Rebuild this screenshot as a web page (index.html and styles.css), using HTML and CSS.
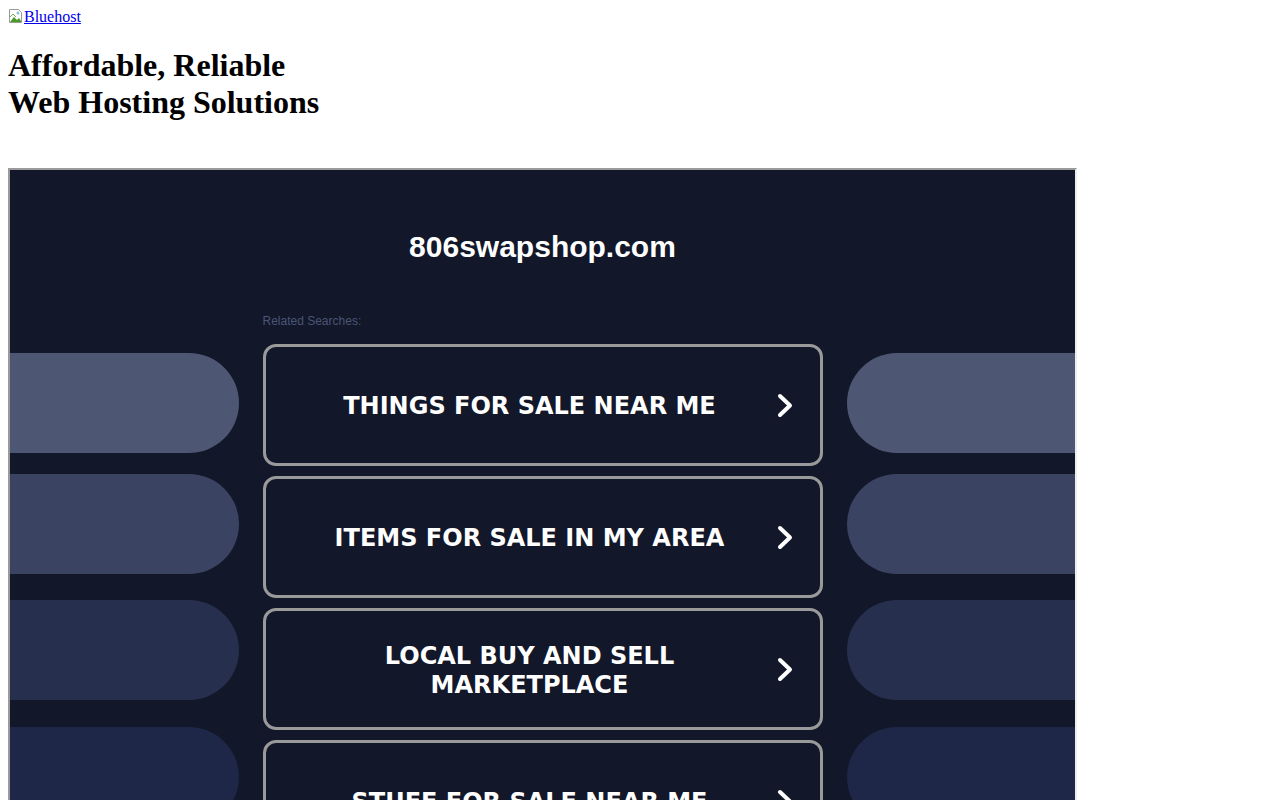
FILE: index.html
```html
<!DOCTYPE html>
<html>
<head>
<meta charset="utf-8">
<title>806swapshop.com</title>
<link rel="stylesheet" href="styles.css">
</head>
<body>
<a class="brand" href="#"><svg class="broken" width="16" height="16" viewBox="0 0 16 16"><path d="M1.5 1.5h9l3 3v10h-12z" fill="#fff" stroke="#9a9a9a"/><path d="M2 14l4-5 3 3 2-2 2 3v1H2z" fill="#4a9a2a"/><path d="M2 9l3-3 3 3" fill="none" stroke="#6ab04c"/><circle cx="10" cy="5" r="1.5" fill="#8ac0e0"/></svg>Bluehost</a>
<h1 class="headline">Affordable, Reliable<br>Web Hosting Solutions</h1>
<div class="frame">
  <div class="domain">806swapshop.com</div>
  <div class="related">Related Searches:</div>
  <div class="grid">
    <div class="pills left">
      <div class="pill p1"></div>
      <div class="pill p2"></div>
      <div class="pill p3"></div>
      <div class="pill p4"></div>
    </div>
    <div class="buttons">
      <a class="btn" href="#"><span class="label">THINGS FOR SALE NEAR ME</span><svg class="chev" width="16" height="25" viewBox="0 0 16 25"><path d="M3 3l10 9.5L3 22" fill="none" stroke="#fff" stroke-width="4" stroke-linecap="round" stroke-linejoin="round"/></svg></a>
      <a class="btn" href="#"><span class="label">ITEMS FOR SALE IN MY AREA</span><svg class="chev" width="16" height="25" viewBox="0 0 16 25"><path d="M3 3l10 9.5L3 22" fill="none" stroke="#fff" stroke-width="4" stroke-linecap="round" stroke-linejoin="round"/></svg></a>
      <a class="btn" href="#"><span class="label">LOCAL BUY AND SELL<br>MARKETPLACE</span><svg class="chev" width="16" height="25" viewBox="0 0 16 25"><path d="M3 3l10 9.5L3 22" fill="none" stroke="#fff" stroke-width="4" stroke-linecap="round" stroke-linejoin="round"/></svg></a>
      <a class="btn" href="#"><span class="label">STUFF FOR SALE NEAR ME</span><svg class="chev" width="16" height="25" viewBox="0 0 16 25"><path d="M3 3l10 9.5L3 22" fill="none" stroke="#fff" stroke-width="4" stroke-linecap="round" stroke-linejoin="round"/></svg></a>
    </div>
    <div class="pills right">
      <div class="pill p1"></div>
      <div class="pill p2"></div>
      <div class="pill p3"></div>
      <div class="pill p4"></div>
    </div>
  </div>
</div>
</body>
</html>
```
FILE: styles.css
```css
body {
  margin: 8px;
  font-family: "Liberation Serif", "Times New Roman", serif;
  background: #fff;
}
.brand {
  color: #0000ee;
  font-size: 16px;
  text-decoration: underline;
}
.broken {
  vertical-align: -2px;
}
.headline {
  font-size: 32px;
  font-weight: bold;
  margin: 21px 0 21px;
  line-height: 37px;
}
.frame {
  margin-top: 47px;
  width: 1065px;
  height: 640px;
  border: 2px solid #eeeeee;
  border-top-color: #9a9a9a;
  border-left-color: #9a9a9a;
  background: #121729;
  overflow: hidden;
  font-family: "Liberation Sans", Arial, sans-serif;
}
.domain {
  padding-top: 60px;
  text-align: center;
  color: #fff;
  font-size: 30px;
  font-weight: bold;
  line-height: 34px;
}
.related {
  width: 560px;
  margin: 50px auto 0;
  font-size: 12px;
  line-height: 14px;
  color: #4b5576;
}
.grid {
  margin-top: 16px;
  display: grid;
  grid-template-columns: 1fr 560px 1fr;
  column-gap: 24px;
  align-items: start;
}
.pills {
  display: flex;
  flex-direction: column;
  padding-top: 9px;
}
.pill {
  height: 100px;
}
.left .pill {
  border-radius: 0 50px 50px 0;
}
.right .pill {
  border-radius: 50px 0 0 50px;
}
.p1 { background: #4d5673; }
.p2 { background: #3b4363; margin-top: 21px; }
.p3 { background: #262f4e; margin-top: 26px; }
.p4 { background: #1e2748; margin-top: 27px; }
.buttons {
  display: flex;
  flex-direction: column;
  gap: 10px;
}
.btn {
  height: 116px;
  border: 3px solid #9a9a9a;
  border-radius: 13px;
  display: flex;
  align-items: center;
  padding: 0 27px 0 20px;
  text-decoration: none;
  color: #fff;
}
.label {
  flex: 1;
  text-align: center;
  font-family: "DejaVu Sans", Verdana, sans-serif;
  font-weight: bold;
  font-size: 24px;
  line-height: 29px;
  padding: 3px 3px 0 0;
}
.chev {
  flex: none;
}
```
